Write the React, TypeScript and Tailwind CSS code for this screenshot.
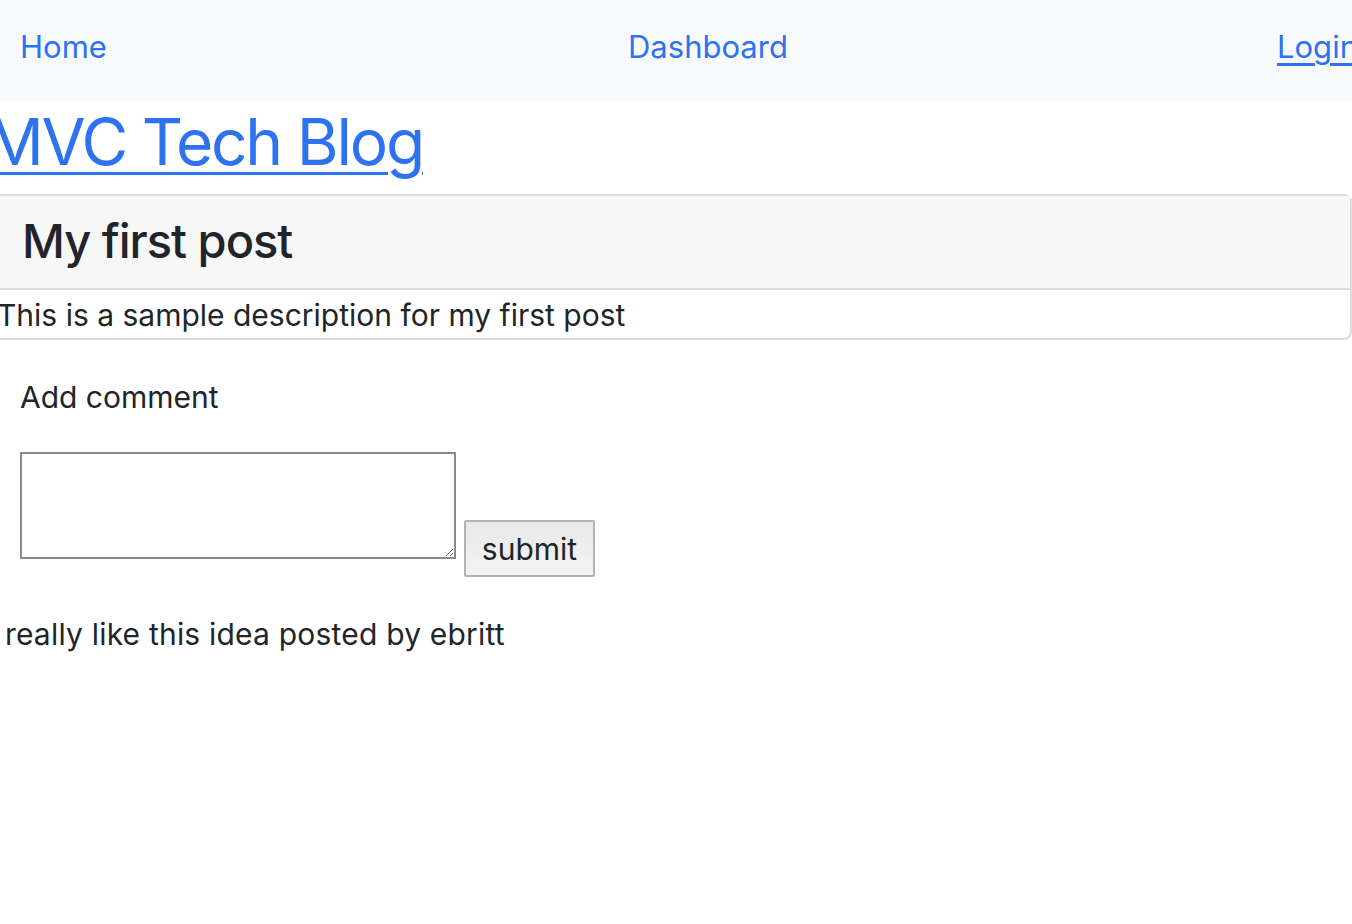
export default function App() {
  return (
    <div className="min-h-screen overflow-hidden bg-white font-['Inter','Noto_Sans',sans-serif] text-[#212529]">
      {/* Top navigation */}
      <nav className="grid h-[101px] grid-cols-[608px_649px_1fr] items-center whitespace-nowrap bg-[#f8f9fa] pb-[6px] pl-5 text-[31px] text-[#2e72f0]">
        <a href="#">Home</a>
        <a href="#">Dashboard</a>
        <a href="#" className="underline underline-offset-[5px]">
          Login
        </a>
      </nav>

      {/* Site title */}
      <h1 className="-ml-[14px] mb-[15px] pt-[4px] whitespace-nowrap text-[64px] font-normal leading-[74px] tracking-[-2.2px] text-[#2e72f0]">
        <a href="#" className="underline decoration-[3px] underline-offset-[7px]">
          MVC Tech Blog
        </a>
      </h1>

      {/* Post card */}
      <div className="-ml-[10px] rounded-r-[8px] border-2 border-[#dcdcdc]">
        <div className="border-b-2 border-[#dcdcdc] bg-[#f7f7f7] pl-[30px] pt-[14px] pb-[16px]">
          <h3 className="text-[47px] font-medium leading-[62px] tracking-[-1px]">My first post</h3>
        </div>
        <p className="whitespace-nowrap pl-[5px] pt-[3px] text-[30px] leading-[45px]">
          This is a sample description for my first post
        </p>
      </div>

      {/* Comment form */}
      <div className="px-5 pt-[35px]">
        <p className="text-[30px] leading-[45px]">Add comment</p>
        <form className="mt-[32px] flex items-start gap-2">
          <textarea className="h-[107px] w-[436px] border-2 border-[#8a8a8a] bg-white"></textarea>
          <button
            type="button"
            className="mt-[68px] h-[57px] w-[131px] rounded-[2px] border-2 border-[#b3b3b3] bg-gradient-to-b from-[#e8e8e8] to-[#f4f4f4] text-[30px] leading-none"
          >
            submit
          </button>
        </form>
      </div>

      {/* Comments */}
      <p className="-ml-[12px] mt-[35px] whitespace-nowrap text-[30px] leading-[45px] tracking-[0.2px]">
        I really like this idea posted by ebritt
      </p>
    </div>
  );
}
